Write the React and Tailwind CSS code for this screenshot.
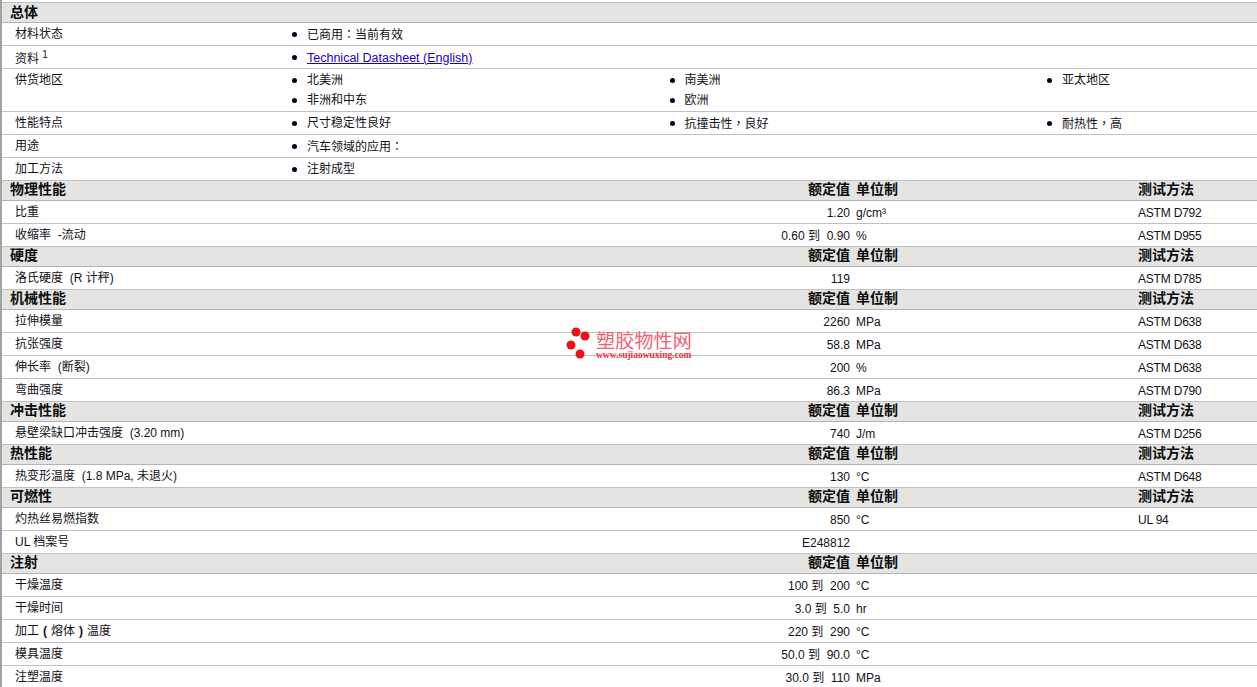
const font = { fontFamily: '"Liberation Sans", "Noto Sans CJK SC", sans-serif' };

// fullwidth punctuation sits centred in the reference
function P({ children }) {
  return <span className="font-['Noto_Sans_CJK_TC']">{children}</span>;
}

function Paren({ children }) {
  return <span className="inline-block w-[12px] text-center font-bold">{children}</span>;
}

const dataSections = [
  {
    title: "物理性能",
    rows: [
      ["比重", "1.20", "g/cm³", "ASTM D792"],
      ["收缩率  ‐流动", "0.60 到  0.90", "%", "ASTM D955"],
    ],
  },
  { title: "硬度", rows: [["洛氏硬度  (R 计秤)", "119", "", "ASTM D785"]] },
  {
    title: "机械性能",
    rows: [
      ["拉伸模量", "2260", "MPa", "ASTM D638"],
      ["抗张强度", "58.8", "MPa", "ASTM D638"],
      ["伸长率  (断裂)", "200", "%", "ASTM D638"],
      ["弯曲强度", "86.3", "MPa", "ASTM D790"],
    ],
  },
  { title: "冲击性能", rows: [["悬壁梁缺口冲击强度  (3.20 mm)", "740", "J/m", "ASTM D256"]] },
  { title: "热性能", rows: [["热变形温度  (1.8 MPa, 未退火)", "130", "°C", "ASTM D648"]] },
  {
    title: "可燃性",
    rows: [
      ["灼热丝易燃指数", "850", "°C", "UL 94"],
      ["UL 档案号", "E248812", "", ""],
    ],
  },
  {
    title: "注射",
    noMethod: true,
    rows: [
      ["干燥温度", "100 到  200", "°C", ""],
      ["干燥时间", "3.0 到  5.0", "hr", ""],
      [<>加工<Paren>(</Paren>熔体<Paren>)</Paren>温度</>, "220 到  290", "°C", ""],
      ["模具温度", "50.0 到  90.0", "°C", ""],
      ["注塑温度", "30.0 到  110", "MPa", ""],
    ],
  },
];

function Header({ title, columns, noMethod }) {
  return (
    <div className={`flex items-start h-[20px] bg-[#e4e4e3] border-b border-[#b4b4b4] text-[14px] font-bold text-[#0c0c0c] ${columns ? "leading-[16px]" : "leading-[18px]"}`}>
      <div className="pl-[8px] w-[300px] shrink-0">{title}</div>
      {columns && (
        <>
          <div className="w-[548px] shrink-0 text-right">额定值</div>
          <div className="pl-[6px] w-[288px] shrink-0">单位制</div>
          {!noMethod && <div>测试方法</div>}
        </>
      )}
    </div>
  );
}

function InfoRow({ label, lines, tall, labelClass = "pt-[1px]" }) {
  return (
    <div className={`flex border-b border-[#c0c0c0] ${tall ? "h-[43px]" : "h-[23px]"}`}>
      <div className={`w-[289px] shrink-0 pl-[13px] leading-[20px] whitespace-pre ${labelClass}`}>{label}</div>
      <div className="flex flex-col pt-[1px]">
        {lines.map((line, i) => (
          <div key={i} className="flex">
            {line.map((item, j) => (
              <div key={j} className="flex items-center h-[20px] w-[377.5px] shrink-0">
                <span className="w-[5px] h-[5px] rounded-full bg-[#000022] ml-[1px] mr-[10px] shrink-0" />
                <span className="whitespace-pre">{item}</span>
              </div>
            ))}
          </div>
        ))}
      </div>
    </div>
  );
}

function DataRow({ row }) {
  return (
    <div className="flex h-[23px] border-b border-[#c0c0c0] pt-[1px] leading-[20px]">
      <div className="w-[300px] shrink-0 pl-[13px] whitespace-pre">{row[0]}</div>
      <div className="w-[548px] shrink-0 text-right whitespace-pre pt-[1px]">{row[1]}</div>
      <div className="w-[288px] shrink-0 pl-[6px] pt-[1px]">{row[2]}</div>
      <div className="pt-[1px] tracking-[-0.2px]">{row[3]}</div>
    </div>
  );
}

export default function App() {
  return (
    <div className="relative h-[687px] w-[1257px] overflow-hidden bg-white text-[12px] text-[#111118]" style={font}>
      <div className="border-l-2 border-[#a2a2a2]">
        <div className="h-[2px] bg-white" />
        <div className="border-t border-[#c0c0c0]" />
        <Header title="总体" />
        <InfoRow label="材料状态" lines={[[<>已商用<P>：</P>当前有效</>]]} />
        <InfoRow
          labelClass="pt-[3px]"
          label={
            <>
              资料 <sup className="text-[10px] -top-[5px]">1</sup>
            </>
          }
          lines={[[<a className="block pt-[2px] text-[12.5px] leading-[15px] text-[#1a00cc] underline">Technical Datasheet (English)</a>]]}
        />
        <InfoRow tall label="供货地区" lines={[["北美洲", "南美洲", "亚太地区"], ["非洲和中东", "欧洲"]]} />
        <InfoRow label="性能特点" lines={[["尺寸稳定性良好", <>抗撞击性<P>，</P>良好</>, <>耐热性<P>，</P>高</>]]} />
        <InfoRow label="用途" lines={[[<>汽车领域的应用<P>：</P></>]]} />
        <InfoRow label="加工方法" lines={[["注射成型"]]} />
        {dataSections.map((section) => (
          <div key={section.title}>
            <Header title={section.title} columns noMethod={section.noMethod} />
            {section.rows.map((row, i) => (
              <DataRow key={i} row={row} />
            ))}
          </div>
        ))}
      </div>

      {/* watermark */}
      <div className="absolute left-[566px] top-[326px] flex">
        <svg width="30" height="34" viewBox="0 0 30 34" className="shrink-0">
          <circle cx="10" cy="6" r="4.5" fill="#ee1111" />
          <circle cx="19" cy="10" r="4.5" fill="#ee1111" />
          <circle cx="5" cy="19" r="4.5" fill="#ee1111" />
          <circle cx="14" cy="28" r="4.5" fill="#ee1111" />
        </svg>
        <div className="flex flex-col">
          <span className="text-[19px] leading-[20px] tracking-[0.2px] text-[#f06070] mt-[6px]">塑胶物性网</span>
          <span className="text-[9.5px] leading-[9px] font-bold text-[#ee3344] -mt-[1px] whitespace-nowrap" style={{ fontFamily: '"Liberation Serif", serif' }}>
            www.sujiaowuxing.com
          </span>
        </div>
      </div>
    </div>
  );
}
